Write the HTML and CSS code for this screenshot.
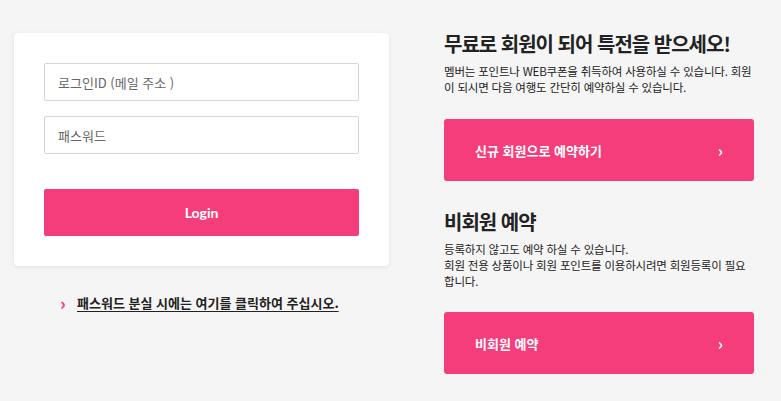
FILE: index.html
```html
<!DOCTYPE html>
<html lang="ko">
<head>
    <meta charset="UTF-8">
    <meta name="viewport" content="width=device-width, initial-scale=1.0">
    <title>로그인</title>
    <link rel="stylesheet" href="styles.css">
</head>
<body>
    <div class="page">
        <div class="left">
            <form class="login-box" id="loginForm">
                <input type="text" class="field" placeholder="로그인ID (메일 주소 )">
                <input type="password" class="field" placeholder="패스워드">
                <button type="submit" class="login-btn">Login</button>
            </form>
            <p class="forgot">
                <span class="chev">&#8250;</span>
                <a href="#">패스워드 분실 시에는 여기를 클릭하여 주십시오.</a>
            </p>
        </div>

        <div class="right">
            <h2>무료로 회원이 되어 특전을 받으세오!</h2>
            <p class="desc">멤버는 포인트나 WEB쿠폰을 취득하여 사용하실 수 있습니다. 회원이 되시면 다음 여행도 간단히 예약하실 수 있습니다.</p>
            <a href="#" class="big-btn">
                <span>신규 회원으로 예약하기</span>
                <span class="arrow">&#8250;</span>
            </a>

            <h2 class="second">비회원 예약</h2>
            <p class="desc">등록하지 않고도 예약 하실 수 있습니다.<br>회원 전용 상품이나 회원 포인트를 이용하시려면 회원등록이 필요합니다.</p>
            <a href="#" class="big-btn">
                <span>비회원 예약</span>
                <span class="arrow">&#8250;</span>
            </a>
        </div>
    </div>
</body>
</html>
```

FILE: styles.css
```css
body {
    margin: 0;
    padding: 0;
    background-color: #f5f5f5;
    font-family: "Noto Sans CJK KR", "Noto Sans", sans-serif;
    color: #222;
}

.page {
    display: flex;
    padding: 33px 0 0 14px;
}

.left {
    width: 375px;
}

.login-box {
    background-color: #fff;
    border-radius: 4px;
    box-shadow: 0 1px 4px rgba(0, 0, 0, 0.08);
    padding: 30px;
    display: flex;
    flex-direction: column;
}

.field {
    height: 38px;
    box-sizing: border-box;
    border: 1px solid #d6d6d6;
    border-radius: 2px;
    padding: 0 13px;
    font-family: inherit;
    font-size: 13px;
    color: #333;
    margin: 0 0 15px;
}

.field::placeholder {
    color: #666;
}

.login-btn {
    margin-top: 20px;
    height: 47px;
    border: none;
    border-radius: 2px;
    background-color: #f53d7b;
    color: #fff;
    font-family: "Lato", "Noto Sans", sans-serif;
    font-weight: bold;
    font-size: 14px;
    cursor: pointer;
}

.forgot {
    margin: 27px 0 0 46px;
    font-size: 13px;
    font-weight: bold;
    display: flex;
    align-items: center;
}

.forgot .chev {
    color: #f53d7b;
    font-size: 17px;
    font-weight: 900;
    width: 17px;
    line-height: 1;
}

.forgot a {
    color: #222;
    text-decoration: underline;
    text-underline-offset: 3px;
}

.right {
    margin-left: 55px;
    width: 310px;
}

.right h2 {
    font-size: 20px;
    font-weight: bold;
    line-height: 26px;
    margin: -2px 0 6px;
    letter-spacing: -1px;
}

.right h2.second {
    margin-top: 28px;
}

.desc {
    font-size: 11.5px;
    line-height: 16px;
    margin: 0 0 24px;
    color: #222;
    letter-spacing: -0.2px;
}

.right h2.second + .desc {
    margin-bottom: 23px;
}

.big-btn {
    display: flex;
    justify-content: space-between;
    align-items: center;
    height: 62px;
    box-sizing: border-box;
    padding: 0 31px;
    background-color: #f53d7b;
    border-radius: 3px;
    color: #fff;
    font-size: 13px;
    font-weight: bold;
    text-decoration: none;
}

.big-btn .arrow {
    font-size: 16px;
    line-height: 1;
}
```
